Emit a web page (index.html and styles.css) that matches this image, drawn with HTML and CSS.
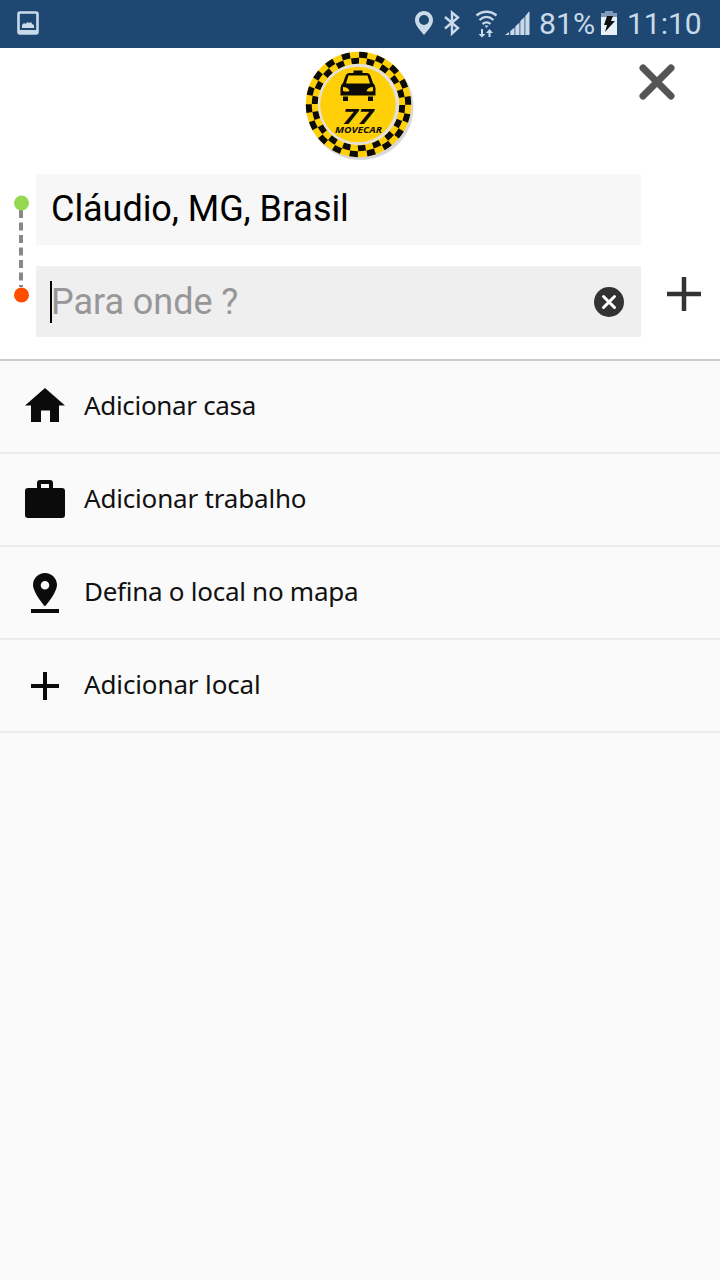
FILE: index.html
```html
<!DOCTYPE html>
<html lang="pt-BR">
<head>
<meta charset="utf-8">
<title>77 Movecar</title>
<link rel="stylesheet" href="styles.css">
</head>
<body>
<header class="status">
  <svg class="shot" width="22" height="24" viewBox="0 0 22 24"><rect x="1.500" y="1.500" width="19" height="21" rx="1.500" fill="none" stroke="#c9daeb" stroke-width="2.600"/><path d="M2 19h18v3H2z" fill="#c9daeb"/><path d="M5 17v-3l2-2 2 1 1-2 2 1 2-1 1 2 2 1v3z" fill="#c9daeb"/></svg>
  <svg class="tray" width="125" height="32" viewBox="0 0 125 32" fill="#c9daeb">
    <path fill-rule="evenodd" d="M10 3c-5 0-9 4-9 9 0 6 6 11 9 15 3-4 9-9 9-15 0-5-4-9-9-9zm0 4a5 5 0 1 1 0 10 5 5 0 0 1 0-10z"/>
    <path d="M31 9l13 11-6 5.500V4.500L44 9.500 31 20.500" fill="none" stroke="#c9daeb" stroke-width="2.400"/>
    <g fill="none" stroke="#c9daeb" stroke-width="2.300"><path d="M62.500 7.500c6-5 14-5 20 0M65.500 12c4.500-4 9.500-4 14 0M68.500 16c2.800-2.200 5.500-2.200 8 0"/></g>
    <path d="M70.500 17.500h4l-2 2.500zM67 21h2v5h2.500L68 29.500 64.500 26H67zM76.500 29h-2v-4H72l3.500-4 3.500 4h-2.500z"/>
    <path d="M91 27l4-3v3zM96.300 23l4.200-3.500V27h-4.200zM101.300 18.500l4.200-4V27h-4.200zM106.300 13l4.200-4V27h-4.200zM111.300 8l4.200-5V27h-4.200z"/>
  </svg>
  <span class="percent">81%</span>
  <svg class="battery" width="16" height="25" viewBox="0 0 16 25"><path d="M4 0h8v2h4v5H0V2h4z" fill="#7f9bb8"/><path d="M0 6h16v18H0z" fill="#e8f1fa"/><path d="M6 5h6l-2 5h4L4 21l2-7H3z" fill="#111"/></svg>
  <span class="clock">11:10</span>
</header>
<section class="search">
  <div class="top">
    <svg class="logo" width="110" height="112" viewBox="0 0 110 112">
      <circle cx="55.500" cy="57" r="53" fill="#d8d8dc"/>
      <circle cx="53.500" cy="54.500" r="52.700" fill="#ffd008"/>
      <g fill="none" stroke="#0c0b08" transform="rotate(-89.300 53.500 54.500)">
        <circle cx="53.500" cy="54.500" r="49.700" stroke-width="6" pathLength="36" stroke-dasharray="0.950 1.050"/>
        <circle cx="53.500" cy="54.500" r="43.700" stroke-width="6" pathLength="36" stroke-dasharray="1" stroke-dashoffset="1"/>
      </g>
      <circle cx="53.500" cy="54.500" r="40.700" fill="#e4e1dc"/>
      <circle cx="53" cy="54.500" r="37.800" fill="#ffd008"/>
      <g fill="#0c0b08"><path fill-rule="evenodd" d="M48.500 20.500h9V23h4q3 0 4 3l2.500 7q2.500 2 2.500 5v7.500h-35V38q0-3 2.500-5l2.500-7q1-3 4-3h4zM43.500 25.500L41 33.500h24l-2.500-8zM38 37v4q4 1 6.500 0Q43 37 38 37zm30 0q-5 0-6.500 4 2.500 1 6.500 0z"/><path d="M38 46.500h5v4.500h-5zM63 46.500h5v4.500h-5z"/></g>
      <text class="logo-num" x="53" y="74" text-anchor="middle" textLength="31" lengthAdjust="spacingAndGlyphs">77</text>
      <text class="logo-name" x="53.500" y="83.200" text-anchor="middle" textLength="47" lengthAdjust="spacingAndGlyphs">MOVECAR</text>
    </svg>
    <svg class="close" width="36" height="36" viewBox="0 0 36 36"><path d="M4 4l28 28M32 4L4 32" stroke="#555" stroke-width="7" stroke-linecap="round"/></svg>
  </div>
  <div class="route">
    <svg class="track" width="16" height="108" viewBox="0 0 16 108"><path d="M8 15v77" stroke="#888" stroke-width="4" stroke-dasharray="8 4.500" stroke-dashoffset="0"/><circle cx="8.500" cy="8" r="7.500" fill="#95d951"/><circle cx="8.500" cy="100" r="7.500" fill="#ff4d00"/></svg>
    <div class="fields">
      <div class="field origin">Cláudio, MG, Brasil</div>
      <div class="field active"><span class="caret"></span><span class="hint">Para onde ?</span>
        <svg class="clear" width="30" height="30" viewBox="0 0 30 30"><circle cx="15" cy="15" r="15" fill="#333"/><path d="M9.500 9.500l11 11M20.500 9.500l-11 11" stroke="#fff" stroke-width="3" stroke-linecap="round"/></svg>
      </div>
    </div>
    <svg class="plus" width="34" height="34" viewBox="0 0 34 34"><path d="M0 17h34M17 0v34" stroke="#333" stroke-width="4.500"/></svg>
  </div>
</section>
<main class="list">
  <div class="item"><svg width="42" height="42" viewBox="0 0 42 42"><path d="M21 2l20 17.500h-6V36h-9V24.500h-9V36H7V19.500H1z"/></svg><span class="t1">Adicionar casa</span></div>
  <div class="item"><svg width="42" height="42" viewBox="0 0 42 42"><path fill-rule="evenodd" d="M16 1h10q3 0 3 3v5h9q3 0 3 3v24q0 3-3 3H4q-3 0-3-3V12q0-3 3-3h9V4q0-3 3-3zm1 4v4h8V5z"/></svg><span class="t2">Adicionar trabalho</span></div>
  <div class="item"><svg width="42" height="42" viewBox="0 0 42 42"><path fill-rule="evenodd" d="M21 1C14.400 1 9 6.200 9 12.800 9 21 21 34.500 21 34.500S33 21 33 12.800C33 6.200 27.600 1 21 1zm0 8a4.300 4.300 0 1 1 0 8.600A4.300 4.300 0 0 1 21 9zM7 37h28v4H7z"/></svg><span class="t3">Defina o local no mapa</span></div>
  <div class="item"><svg width="42" height="42" viewBox="0 0 42 42"><path d="M7 19h12V7h4v12h12v4H23v12h-4V23H7z"/></svg><span class="t4">Adicionar local</span></div>
</main>
</body>
</html>
```
FILE: styles.css
```css
* { box-sizing: border-box; }
body { margin: 0; width: 720px; min-height: 1280px; background: #fafafa; font-family: Roboto, sans-serif; color: #000; }
svg { display: block; flex: none; }
.status { height: 48px; background: #1e4872; color: #c9daeb; display: flex; padding-left: 17px; font-size: 31px; line-height: 48px; white-space: nowrap; }
.shot { margin-top: 11px; }
.tray { margin: 8px 0 0 375px; }
.percent { width: 62px; font-size: 30.300px; }
.battery { margin-top: 11px; }
.clock { margin-left: 10px; font-size: 30px; }
.search { height: 313px; background: #fff; border-bottom: 2px solid #ccc; }
.top { display: flex; height: 126px; padding-left: 305px; }
.logo { margin-top: 2px; }
.close { margin: 16px 0 0 224px; }
.logo-num { font: italic bold 22px "Open Sans", sans-serif; fill: #0c0b08; }
.logo-name { font: italic bold 9px "Open Sans", sans-serif; fill: #0c0b08; }
.route { display: flex; padding-left: 13px; }
.track { margin-top: 21px; }
.fields { display: grid; gap: 21px; width: 605px; margin-left: 7px; }
.field { height: 71px; display: flex; align-items: center; padding-left: 15px; background: #f7f7f7; font-size: 36px; letter-spacing: -0.050px; white-space: nowrap; }
.origin { padding: 0 0 2px 15px; }
.active { background: #efefef; padding-left: 14px; }
.caret { width: 2px; height: 42px; background: #000; }
.hint { color: #979797; margin-left: -1px; }
.clear { margin: 0 17.500px 0 auto; }
.plus { margin: 103px 0 0 26px; }
.item { display: flex; align-items: center; height: 93px; padding: 0 24px; gap: 18px; border-bottom: 2px solid #ebebeb; font: 26px "Noto Sans", sans-serif; color: #111; white-space: nowrap; }
.item span { padding-bottom: 3px; }
.item svg { fill: #0b0b0b; }
.t1 { letter-spacing: -0.320px; }
.t2 { letter-spacing: -0.180px; }
.t3 { letter-spacing: -0.270px; }
.t4 { letter-spacing: -0.130px; }
```
